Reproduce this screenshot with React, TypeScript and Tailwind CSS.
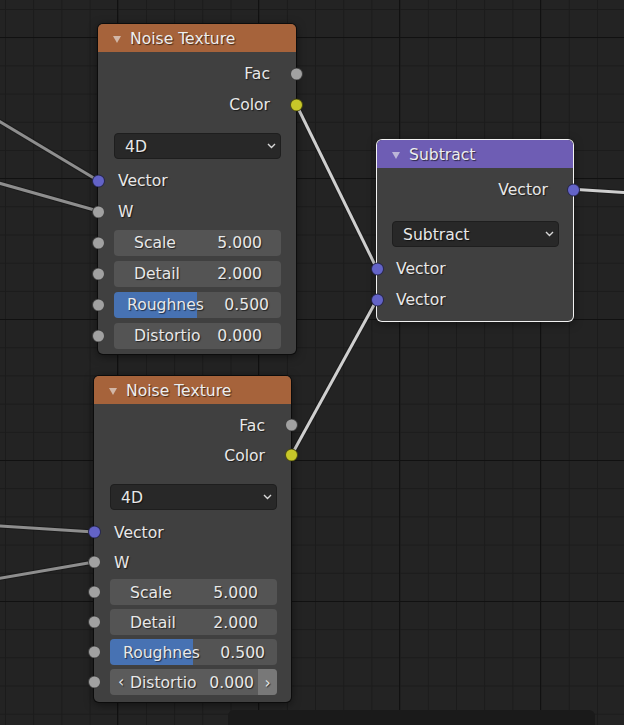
import React from 'react';

const font = { fontFamily: '"DejaVu Sans", "Liberation Sans", sans-serif' };

const socketColors = {
  grey: 'bg-[#a1a1a1]',
  yellow: 'bg-[#c7c729]',
  vector: 'bg-[#6363c7]',
};

type SocketColor = keyof typeof socketColors;

// sockets sit on the node border, over the edge
function Socket({ side, color }: { side: 'left' | 'right'; color: SocketColor }) {
  return (
    <span
      className={`absolute top-1/2 -translate-y-1/2 w-[13px] h-[13px] rounded-full border border-black/60 ${
        side === 'left' ? '-left-[6.5px]' : '-right-[6.5px]'
      } ${socketColors[color]}`}
    />
  );
}

// padding pushes glyphs down a touch, where Blender draws them
function T({ children }: { children: React.ReactNode }) {
  return <span className="pt-[3px]">{children}</span>;
}

function Output({ label, color, pitch, pr }: { label: string; color: SocketColor; pitch: string; pr: string }) {
  return (
    <div className={`relative flex items-center justify-end ${pitch} ${pr}`}>
      <T>{label}</T>
      <Socket side="right" color={color} />
    </div>
  );
}

function Input({ label, color, pitch, className = '' }: { label: string; color: SocketColor; pitch: string; className?: string }) {
  return (
    <div className={`relative flex items-center ${pitch} ${className}`}>
      <T>{label}</T>
      <Socket side="left" color={color} />
    </div>
  );
}

function Chevron() {
  return (
    <svg width="9" height="6" viewBox="0 0 9 6" className="shrink-0">
      <polyline points="1,1 4.5,4.5 8,1" fill="none" stroke="#d8d8d8" strokeWidth="1.4" />
    </svg>
  );
}

function Select({ value, className }: { value: string; className: string }) {
  return (
    <div
      className={`h-[26px] w-[167px] rounded-[4px] bg-[#282828] border border-[#1e1e1e] flex items-center justify-between pl-[10px] pr-[4px] ${className}`}
    >
      <T>{value}</T>
      <Chevron />
    </div>
  );
}

function NumField({
  label,
  value,
  pitch,
  slider,
  hover,
}: {
  label: string;
  value: string;
  pitch: string;
  slider?: boolean;
  hover?: boolean;
}) {
  return (
    <div className={`relative flex items-center pl-[16px] ${pitch}`}>
      <Socket side="left" color="grey" />
      <div
        className={`relative w-[167px] h-[26px] rounded-[4px] overflow-hidden flex items-stretch ${
          hover ? 'bg-[#5b5b5b]' : 'bg-[#545454]'
        } ${slider ? 'bg-[linear-gradient(to_right,#4772b3_83px,#545454_83px)]' : ''}`}
      >
        {hover ? (
          <>
            <span className="w-[20px] flex items-center justify-center pl-[2px] pt-[2px]">‹</span>
            <span className="flex-1 flex items-center justify-between pr-[2px] pt-[3px]">
              <span>{label}</span>
              <span>{value}</span>
            </span>
            <span className="w-[19px] ml-[2px] bg-[#787878] flex items-center justify-center pt-[3px]">›</span>
          </>
        ) : (
          <span
            className={`flex-1 flex items-center justify-between pt-[3px] ${slider ? 'pl-[13px] pr-[12px]' : 'pl-[20px] pr-[19px]'}`}
          >
            <span>{label}</span>
            <span>{value}</span>
          </span>
        )}
      </div>
    </div>
  );
}

function Header({ title, color }: { title: string; color: string }) {
  return (
    <div className={`h-[28px] rounded-t-[5px] flex items-center gap-[9px] pl-[15px] ${color}`}>
      <svg width="8" height="7" viewBox="0 0 8 7" className="mt-[3px] opacity-60">
        <polygon points="0,0 8,0 4,7" fill="#f0f0f0" />
      </svg>
      <span className="pt-[4px] text-[#eeeeee]">{title}</span>
    </div>
  );
}

function NoiseNode({ position, tight }: { position: string; tight?: boolean }) {
  const pitch = tight ? 'h-[30px]' : 'h-[31px]';
  return (
    <div
      className={`absolute ${position} rounded-[5px] bg-[#404040] shadow-[0_0_0_1px_#0c0c0c,0_2px_10px_rgba(0,0,0,0.55)]`}
    >
      <Header title="Noise Texture" color="bg-[#a6633b]" />
      <div className={`flex flex-col ${tight ? 'pt-[6px] pb-[5px]' : 'pt-[6px] pb-[3px]'}`}>
        <Output label="Fac" color="grey" pitch={pitch} pr="pr-[26px]" />
        <Output label="Color" color="yellow" pitch={pitch} pr="pr-[26px]" />
        <div className={`pl-[16px] ${tight ? 'pt-[14px] pb-[7px]' : 'pt-[13px] pb-[6px]'}`}>
          <Select value="4D" className="" />
        </div>
        <Input label="Vector" color="vector" pitch={pitch} className="pl-[20px]" />
        <Input label="W" color="grey" pitch={pitch} className="pl-[20px]" />
        <NumField label="Scale" value="5.000" pitch={pitch} />
        <NumField label="Detail" value="2.000" pitch={pitch} />
        <NumField label="Roughnes" value="0.500" pitch={pitch} slider />
        <NumField label="Distortio" value="0.000" pitch={pitch} hover={tight} />
      </div>
    </div>
  );
}

function SubtractNode() {
  return (
    <div className="absolute left-[377px] top-[140px] w-[196px] rounded-[5px] bg-[#404040] shadow-[0_0_0_1px_#f2f2f2,0_2px_10px_rgba(0,0,0,0.55)]">
      <Header title="Subtract" color="bg-[#6e5db4]" />
      <div className="flex flex-col pt-[6px] pb-[6px]">
        <Output label="Vector" color="vector" pitch="h-[31px]" pr="pr-[25px]" />
        <div className="pl-[15px] pt-[16px] pb-[6px]">
          <Select value="Subtract" className="" />
        </div>
        <Input label="Vector" color="vector" pitch="h-[31px]" className="pl-[19px]" />
        <Input label="Vector" color="vector" pitch="h-[31px]" className="pl-[19px]" />
      </div>
    </div>
  );
}

function Wire({ x1, y1, x2, y2, active }: { x1: number; y1: number; x2: number; y2: number; active?: boolean }) {
  return (
    <g>
      <line x1={x1} y1={y1} x2={x2} y2={y2} stroke="#161616" strokeOpacity="0.6" strokeWidth="5" />
      <line x1={x1} y1={y1} x2={x2} y2={y2} stroke={active ? '#cfcfcf' : '#8e8e8e'} strokeWidth="3" />
    </g>
  );
}

export default function App() {
  return (
    <div
      className="relative w-[624px] h-[725px] overflow-hidden bg-[#232323] text-[15.6px] text-[#e8e8e8] leading-none [text-shadow:1px_1px_1px_rgba(0,0,0,0.6)] [background-image:linear-gradient(to_right,#111111_1px,transparent_1px),linear-gradient(to_bottom,#111111_1px,transparent_1px),linear-gradient(to_right,#1b1b1b_1px,transparent_1px),linear-gradient(to_bottom,#1b1b1b_1px,transparent_1px)] [background-size:141px_141px,141px_141px,28.2px_28.2px,28.2px_28.2px] [background-position:117px_37px,117px_37px,5px_9px,5px_9px]"
      style={font}
    >
      {/* noodles */}
      <svg className="absolute inset-0" width="624" height="725">
        <Wire x1={-10} y1={115.7} x2={98} y2={180.5} />
        <Wire x1={-10} y1={180.5} x2={98} y2={211} />
        <Wire x1={-10} y1={525.4} x2={94} y2={532} />
        <Wire x1={-10} y1={580} x2={94} y2={562} />
        <Wire x1={296} y1={104} x2={377} y2={269} active />
        <Wire x1={291} y1={456} x2={377} y2={299.5} active />
        <Wire x1={573} y1={189.3} x2={630} y2={192.8} active />
      </svg>

      {/* nodes on the canvas */}
      <NoiseNode position="left-[98px] top-[24px] w-[198px]" />
      <SubtractNode />
      <NoiseNode position="left-[94px] top-[376px] w-[197px]" tight />

      {/* region overlay at bottom */}
      <div className="absolute left-[228px] top-[710px] w-[367px] h-[20px] rounded-t-[6px] bg-[#1a1a1a]" />
    </div>
  );
}
